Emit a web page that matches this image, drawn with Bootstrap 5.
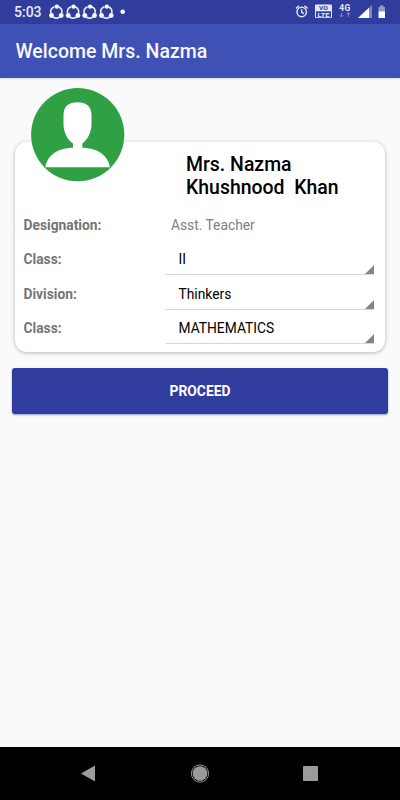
<!DOCTYPE html>
<html lang="en">
<head>
<meta charset="utf-8">
<meta name="viewport" content="width=device-width, initial-scale=1">
<title>Welcome Mrs. Nazma</title>
<link href="https://cdn.jsdelivr.net/npm/bootstrap@5.3.0/dist/css/bootstrap.min.css" rel="stylesheet">
<style>
body{font-family:Roboto,"Liberation Sans",sans-serif;background:#fafafa;color:#000;height:800px;overflow:hidden}
svg{display:block;flex:none}
.status-bar{height:24px;background:#303d9d;color:#e9ebf8;padding:0 14px 0 14px}
.clock{font-size:14px;font-weight:500;line-height:25px;width:35px;white-space:nowrap}
.app-bar{height:54px;background:#3f51b5;padding:0 15.5px;box-shadow:0 1px 2px rgba(0,0,0,.12)}
.app-title{font-size:19.5px;font-weight:500;line-height:56px;color:#f7f8ff;white-space:nowrap}
.profile{margin:64px 15px 0;height:210px;border-radius:12px;background:#fff;box-shadow:0 1px 4px rgba(0,0,0,.27)}
.avatar{position:absolute;left:16px;top:-54px}
.person{margin:0;padding:11px 0 0 171px;height:66px;font-size:19.45px;line-height:23px;font-weight:500;white-space:pre}
.field-row{height:34.4px;padding-left:8.5px;font-size:13.8px}
.field-name{width:142px;font-weight:700;color:#757575;line-height:34px}
.field-text{padding-left:5.5px;color:#808080;line-height:34px}
.spinner{width:208.5px;margin-right:10px;padding-left:13px;height:33px;line-height:30px;border-bottom:1px solid #d4d4d4}
.proceed{margin:16px 12px 0;height:46px;background:#303d9f;border-radius:3px;color:#fff;font-size:13.8px;font-weight:700;line-height:47px;box-shadow:0 1px 2px rgba(48,61,159,.5)}
.system-nav{height:53px;background:#000}
</style>
</head>
<body class="d-flex flex-column">
<div class="status-bar d-flex align-items-center flex-shrink-0">
  <span class="clock">5:03</span>
  <svg width="78" height="24" viewBox="0 0 78 24">
    <defs><g id="share" fill="none" stroke="#e9ecfa" stroke-width="1.6">
      <path d="M5.300 6.800A5.700 5.700 0 0 0 1.800 13M9.500 6.800A5.700 5.700 0 0 1 12.800 13M4 17A5.700 5.700 0 0 0 10.700 17"/>
      <g fill="#fff" stroke="none"><circle cx="7.800" cy="6.600" r="2.200"/><circle cx="2.500" cy="15.500" r="2.400"/><circle cx="12.200" cy="15.500" r="2.400"/></g></g></defs>
    <use href="#share"/><use href="#share" x="16.700"/><use href="#share" x="33.300"/><use href="#share" x="50"/>
    <circle cx="73.700" cy="11.700" r="2.300" fill="#fff"/>
  </svg>
  <svg class="ms-auto" width="92" height="24" viewBox="294 0 92 24">
    <g fill="none" stroke="#dfe3f6" stroke-width="1.500"><circle cx="301.700" cy="12" r="4.700"/><path d="M301.700 9.300V12.300L304 13.700M296 8.300L299 5.900M304.500 5.900L307.500 8.300"/></g>
    <rect x="315" y="4.500" width="17" height="13.500" rx="1" fill="#e4e7f8"/><rect x="316" y="11.300" width="15" height="5.900" fill="#303d9d"/>
    <g font-family="Roboto,sans-serif" font-weight="700" text-anchor="middle"><text x="323.500" y="10.200" font-size="5.800" textLength="9" lengthAdjust="spacingAndGlyphs" fill="#303d9d">VO</text><text x="323.500" y="16.700" font-size="5.600" textLength="12" lengthAdjust="spacingAndGlyphs" fill="#e4e7f8">LTE</text><text x="345" y="11" font-size="8.500" letter-spacing=".4" fill="#e9ebf8">4G</text></g>
    <path d="M341.500 12.500V17M339.500 15L341.500 17L343.500 15M348.500 17V12.500M346.500 14.500L348.500 12.500L350.500 14.500" fill="none" stroke="#7e87c5"/>
    <path d="M358 18L372 5V18Z" fill="#7e86c5"/><path d="M358 18L369 7.700V18Z" fill="#fff"/>
    <path d="M378.500 7H380V5.500H383.500V7H385V12H378.500Z" fill="#8f97d0"/><path d="M378.500 11.500H385V18H378.500Z" fill="#fff"/>
  </svg>
</div>
<header class="app-bar flex-shrink-0"><h1 class="app-title m-0">Welcome Mrs. Nazma</h1></header>
<main class="flex-grow-1">
  <section class="profile position-relative">
    <svg class="avatar" width="94" height="94" viewBox="0 0 94 94"><circle cx="46.700" cy="46.700" r="46.600" fill="#30a045"/>
      <path fill="#fff" d="M46.500 14.200C55 14.200 60.500 18 60.500 27V36C60.500 44 56.500 52 51.300 55.500V59.700C65 60 77 66 79 79.300H14.300C16.500 66 28 60 42 59.700V55.500C36.500 52 32.500 44 32.500 36V27C32.500 18 38 14.200 46.500 14.200Z"/></svg>
    <h2 class="person">Mrs. Nazma
Khushnood  Khan</h2>
    <div class="field-row d-flex"><span class="field-name">Designation:</span><span class="field-text">Asst. Teacher</span></div>
    <div class="field-row d-flex"><span class="field-name">Class:</span><div class="spinner d-flex justify-content-between align-items-end"><span>II</span><svg width="9" height="9"><path d="M9 0V9H0Z" fill="#858585"/></svg></div></div>
    <div class="field-row d-flex"><span class="field-name">Division:</span><div class="spinner d-flex justify-content-between align-items-end"><span>Thinkers</span><svg width="9" height="9"><path d="M9 0V9H0Z" fill="#858585"/></svg></div></div>
    <div class="field-row d-flex"><span class="field-name">Class:</span><div class="spinner d-flex justify-content-between align-items-end"><span>MATHEMATICS</span><svg width="9" height="9"><path d="M9 0V9H0Z" fill="#858585"/></svg></div></div>
  </section>
  <div class="d-grid"><button type="button" class="proceed btn border-0 p-0">PROCEED</button></div>
</main>
<nav class="system-nav flex-shrink-0" aria-label="System navigation">
  <svg width="400" height="53" viewBox="0 0 400 53"><g fill="#9b9b9b"><path d="M81 26.500L95 18.500V34.500Z"/><circle cx="200" cy="26.500" r="7.300"/><rect x="303" y="19" width="15" height="15" rx=".7"/></g><circle cx="200" cy="26.500" r="8.600" fill="none" stroke="#999"/></svg>
</nav>
<script src="https://cdn.jsdelivr.net/npm/bootstrap@5.3.0/dist/js/bootstrap.bundle.min.js"></script>
</body>
</html>
